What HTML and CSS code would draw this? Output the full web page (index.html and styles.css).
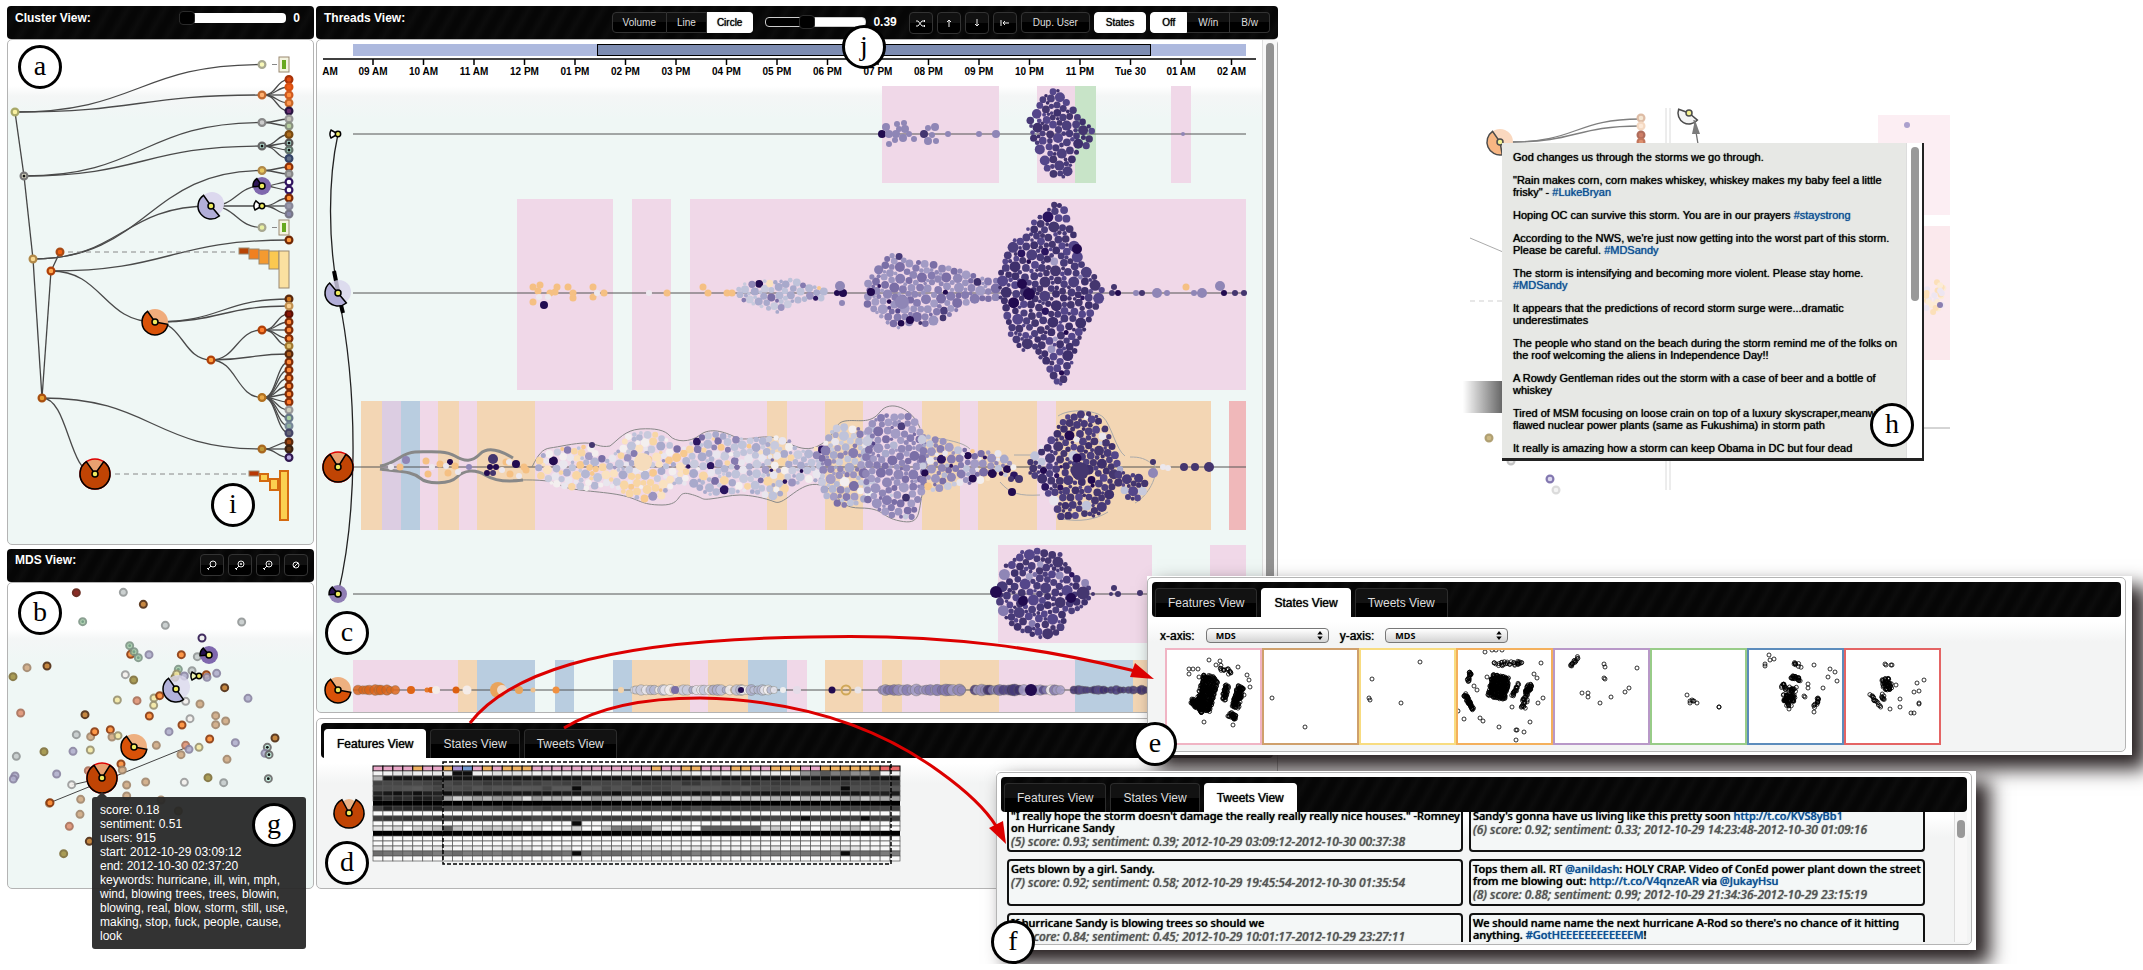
FILE: index.html
```html
<!DOCTYPE html>
<html lang="en">
<head>
<meta charset="utf-8">
<title>Cluster, MDS and Threads Views</title>
<link rel="stylesheet" href="styles.css">
</head>
<body>
<main class="stage">
  <div class="dashboard">
    <div class="column">
      <header class="bar">
        <h2 class="bar-title">Cluster View:</h2>
        <label class="slider slider-cluster"><input type="range" min="0" max="100" value="0" aria-label="Cluster level"><output>0</output></label>
      </header>
      <section class="panel cluster-panel"><svg id="cluster" viewBox="8 40 305 504"></svg></section>
      <header class="bar bar-mds">
        <h2 class="bar-title">MDS View:</h2>
        <div class="tools">
          <button class="btn icon" aria-label="Zoom"><svg viewBox="0 0 12 12"><circle cx="7" cy="5" r="3"/><path d="M5 7 2 10M1 9l2 2"/></svg></button>
          <button class="btn icon" aria-label="Zoom in"><svg viewBox="0 0 12 12"><circle cx="7" cy="5" r="3"/><path d="M5 7 2 10M1 9l2 2M6 5h2M7 4v2"/></svg></button>
          <button class="btn icon" aria-label="Zoom out"><svg viewBox="0 0 12 12"><circle cx="7" cy="5" r="3"/><path d="M5 7 2 10M1 9l2 2M6 5h2"/></svg></button>
          <button class="btn icon" aria-label="Reset"><svg viewBox="0 0 12 12"><circle cx="6" cy="6" r="3"/><path d="m4 8 4-4"/></svg></button>
        </div>
      </header>
      <section class="panel"><svg id="mds" viewBox="8 583 305 305"></svg></section>
    </div>
    <div class="column">
      <header class="bar">
        <h2 class="bar-title">Threads View:</h2>
        <div class="tools tools-threads">
          <div class="group group-mode">
            <button class="btn">Volume</button><button class="btn">Line</button><button class="btn on">Circle</button>
          </div>
          <label class="slider slider-threads"><input type="range" min="0" max="100" value="39" aria-label="Thread threshold"><output>0.39</output></label>
          <button class="btn icon" aria-label="Shuffle"><svg viewBox="0 0 12 12"><path d="M1 4h2l4 5h3M1 9h2l4-5h3M9 3l1 1-1 1M9 8l1 1-1 1"/></svg></button>
          <button class="btn icon" aria-label="Up"><svg viewBox="0 0 12 12"><path d="M6 10V3M4 5l2-2 2 2"/></svg></button>
          <button class="btn icon" aria-label="Down"><svg viewBox="0 0 12 12"><path d="M6 2v7M4 7l2 2 2-2"/></svg></button>
          <button class="btn icon" aria-label="Align left"><svg viewBox="0 0 12 12"><path d="M2 3v6M10 6H4M6 4 4 6l2 2"/></svg></button>
          <button class="btn">Dup. User</button>
          <button class="btn on">States</button>
          <div class="group">
            <button class="btn on">Off</button><button class="btn">W/in</button><button class="btn">B/w</button>
          </div>
        </div>
      </header>
      <section class="panel threads-panel"><svg id="threads" viewBox="317 40 960 672"></svg></section>
      <section class="panel framed">
        <nav class="tabs"><button class="tab on">Features View</button><button class="tab">States View</button><button class="tab">Tweets View</button></nav>
        <svg id="features" viewBox="321 757 952 126"></svg>
      </section>
    </div>
  </div>

  <div class="tooltip">score: 0.18<br>sentiment: 0.51<br>users: 915<br>start: 2012-10-29 03:09:12<br>end: 2012-10-30 02:37:20<br>keywords: hurricane, ill, win, mph, wind, blowing trees, trees, blowin, blowing, real, blow, storm, still, use, making, stop, fuck, people, cause, look</div>

  <svg id="backdrop" class="backdrop" viewBox="1460 100 490 395"></svg>
  <section class="popup">
    <div class="popup-text">
      <p>God changes us through the storms we go through.</p>
      <p>"Rain makes corn, corn makes whiskey, whiskey makes my baby feel a little frisky" - <a href="#">#LukeBryan</a></p>
      <p>Hoping OC can survive this storm. You are in our prayers <a href="#">#staystrong</a></p>
      <p>According to the NWS, we're just now getting into the worst part of this storm. Please be careful. <a href="#">#MDSandy</a></p>
      <p>The storm is intensifying and becoming more violent. Please stay home. <a href="#">#MDSandy</a></p>
      <p>It appears that the predictions of record storm surge were...dramatic underestimates</p>
      <p>The people who stand on the beach during the storm remind me of the folks on the roof welcoming the aliens in Independence Day!!</p>
      <p>A Rowdy Gentleman rides out the storm with a case of beer and a bottle of whiskey</p>
      <p>Tired of MSM focusing on loose crain on top of a luxury skyscraper,meanwhile flawed nuclear power plants (same as Fukushima) in storm path</p>
      <p>It really is amazing how a storm can keep Obama in DC but four dead</p>
    </div>
    <div class="track"><div class="thumb"></div></div>
  </section>

  <section class="window window-states">
    <div class="panel framed">
      <nav class="tabs"><button class="tab">Features View</button><button class="tab on">States View</button><button class="tab">Tweets View</button></nav>
      <div class="axes">
        <label for="x-axis">x-axis:</label><span class="select"><select id="x-axis"><option>MDS</option></select><svg viewBox="0 0 6 10"><path d="M3 0 6 4H0zM3 10 0 6h6z"/></svg></span>
        <label for="y-axis">y-axis:</label><span class="select"><select id="y-axis"><option>MDS</option></select><svg viewBox="0 0 6 10"><path d="M3 0 6 4H0zM3 10 0 6h6z"/></svg></span>
      </div>
      <div class="plots" id="plots"></div>
    </div>
  </section>

  <section class="window window-tweets">
    <div class="panel framed">
      <nav class="tabs"><button class="tab">Features View</button><button class="tab">States View</button><button class="tab on">Tweets View</button></nav>
      <div class="tweets">
        <div class="cards">
          <article class="card cut">"I really hope the storm doesn't damage the really really really nice houses." -Romney on Hurricane Sandy<em>(5) score: 0.93; sentiment: 0.39; 2012-10-29 03:09:12-2012-10-30 00:37:38</em></article>
          <article class="card cut">Sandy's gonna have us living like this pretty soon <a href="#">http://t.co/KVS8yBb1</a><em>(6) score: 0.92; sentiment: 0.33; 2012-10-29 14:23:48-2012-10-30 01:09:16</em></article>
          <article class="card">Gets blown by a girl. Sandy.<em>(7) score: 0.92; sentiment: 0.58; 2012-10-29 19:45:54-2012-10-30 01:35:54</em></article>
          <article class="card">Tops them all. RT <a href="#">@anildash</a>: HOLY CRAP. Video of ConEd power plant down the street from me blowing out: <a href="#">http://t.co/V4qnzeAR</a> via <a href="#">@JukayHsu</a><em>(8) score: 0.88; sentiment: 0.99; 2012-10-29 21:34:36-2012-10-29 23:15:19</em></article>
          <article class="card">If hurricane Sandy is blowing trees so should we<em>(9) score: 0.84; sentiment: 0.45; 2012-10-29 10:01:17-2012-10-29 23:27:11</em></article>
          <article class="card">We should name name the next hurricane A-Rod so there's no chance of it hitting anything. <a href="#">#GotHEEEEEEEEEEEEM</a>!</article>
        </div>
        <div class="track"><div class="thumb"></div></div>
      </div>
    </div>
  </section>

  <svg class="arrows" viewBox="0 0 2143 963">
    <path d="M470 723C505 678 590 640 810 637C950 633 1050 650 1135 671"/>
    <path d="M564 728C610 700 670 698 700 698C800 700 880 728 940 772C965 790 985 808 996 826"/>
    <polygon points="1154,679 1130,677 1135,663"/>
    <polygon points="1006,844 989,828 1003,821"/>
  </svg>
  <span class="marker m-a">a</span><span class="marker m-b">b</span><span class="marker m-c">c</span><span class="marker m-d">d</span><span class="marker m-e">e</span>
  <span class="marker m-f">f</span><span class="marker m-g">g</span><span class="marker m-h">h</span><span class="marker m-i">i</span><span class="marker m-j">j</span>
</main>
<script src="charts.js"></script>
</body>
</html>
```

FILE: styles.css
```css
* { box-sizing: border-box; }
body { margin: 0; background: #fff; color: #000; font-family: "Liberation Sans", Arial, sans-serif; font-size: 12px; }
svg { display: block; }
a { color: #0a4f94; text-decoration: none; }
button, select, input { font: inherit; margin: 0; }

.stage { position: relative; height: 964px; padding: 6px 0 0 7px; overflow: hidden; }
.dashboard { display: grid; grid-template-columns: 307fr 962fr 863fr; gap: 2px; align-items: start; }
.column > .panel > svg, .framed > svg { width: 100%; height: auto; }

.bar { display: flex; justify-content: space-between; height: 33px; padding: 6px 8px; border-radius: 4px; color: #fff; background: repeating-linear-gradient(120deg, #060606 0 4px, #0c0c0c 10px, #060606 16px); }
.bar-mds { margin-top: 4px; padding: 5px 6px 5px 8px; }
.bar-title { margin: 0; font-size: 12px; line-height: 12px; font-weight: bold; }
.tools { display: flex; gap: 4px; }
.group { display: flex; }
.btn { height: 21px; padding: 0 10px; border: 1px solid #333; border-radius: 4px; background: linear-gradient(#111 50%, #000 50%); color: #ddd; font-size: 10px; }
.btn.icon { display: grid; place-items: center; width: 24px; height: 22px; padding: 0; }
.btn.icon svg { width: 12px; height: 12px; fill: none; stroke: #eee; stroke-width: 1; }
.btn.on { background: #fff; border-color: #fff; color: #000; text-shadow: 0 0 1px #000; }
.tools-threads .btn:not(.icon) { padding: 0 11px; }
.tools-threads .group-mode .btn:not(.icon) { padding: 0 10px; }
.group .btn { border-radius: 0; }
.group .btn:first-child { border-radius: 4px 0 0 4px; }
.group .btn:last-child { border-radius: 0 4px 4px 0; }
.group .btn + .btn { border-left-width: 0; }

.slider { display: flex; align-items: center; gap: 7px; height: 12px; font-weight: bold; }
.slider input { appearance: none; width: 107px; height: 10px; border-radius: 4px; background: #fff; }
.slider input::-webkit-slider-thumb { appearance: none; width: 16px; height: 14px; border: 1px solid #2a2a2a; border-radius: 4px; background: #000; }
.slider-cluster { padding-right: 6px; }
.slider-threads { height: 19px; margin: 0 8px; }
.slider-threads input { width: 101px; border: 1px solid #ccc; background: linear-gradient(90deg, #000 40%, #fff 40%); }

.panel { border: 1px solid #b4b4b4; border-radius: 5px; background: linear-gradient(#fff 46px, #f4f6f6 56px, #eff7f5 80px); }
.threads-panel { margin-bottom: 5px; }
.framed { padding: 4px; background: linear-gradient(#fff 44px, #f3f4f4 64px); }
.tabs { display: flex; gap: 4px; height: 35px; padding: 6px 3px 0; border-radius: 4px; background: repeating-linear-gradient(120deg, #060606 0 4px, #0c0c0c 10px, #060606 16px); }
.tab { padding: 0 12px; border: 1px solid #2c2c2c; border-bottom: 0; border-radius: 4px 4px 0 0; background: linear-gradient(#121212 50%, #000 50%); color: #ddd; }
.tab.on { border-color: #fff; background: #fff; color: #000; text-shadow: 0 0 1px #000; }

.axis-label { font-size: 10px; font-weight: bold; text-anchor: middle; }

.tooltip { position: absolute; left: 92px; top: 797px; width: 214px; padding: 6px 8px; border-radius: 3px; background: rgba(38, 38, 38, .94); color: #fff; line-height: 14px; }
.tooltip::before { content: ""; position: absolute; left: 5px; top: -5px; border: 5px solid transparent; border-top: 0; border-bottom-color: #333; }

.backdrop { position: absolute; left: 1460px; top: 100px; width: 490px; opacity: .7; }
.popup { position: absolute; left: 1502px; top: 143px; display: flex; width: 422px; height: 318px; border-right: 2px solid #222; border-bottom: 3px solid #222; background: #e7e8e5; overflow: hidden; }
.popup-text { flex: 1; padding: 8px 8px 0 11px; font-size: 11px; line-height: 12px; text-shadow: 0 0 1px currentColor; }
.popup p { margin: 0 0 11px; }
.track { width: 16px; padding: 4px; border-left: 1px solid #ddd; background: #fff; }
.thumb { width: 8px; height: 154px; border-radius: 4px; background: #999; }

.window { position: absolute; background: #fff; box-shadow: 12px 12px 18px 2px #2a2324; }
.window-states { left: 1147px; top: 576px; width: 985px; height: 179px; padding: 1px 6px 3px 0; }
.window-tweets { left: 996px; top: 771px; width: 980px; height: 179px; padding: 1px 4px 5px 0; }
.window .panel { height: 100%; }
.axes { display: flex; align-items: center; gap: 11px; height: 15px; margin: 11px 0 5px 8px; text-shadow: 0 0 1px #000; }
.select { position: relative; }
.select select { display: block; appearance: none; width: 123px; height: 15px; padding: 0 9px; border: 1px solid #777; border-radius: 4px; background: linear-gradient(#fff, #d4d4d4); font: bold 9px "Open Sans", sans-serif; color: #000; }
.select svg { position: absolute; right: 6px; top: 3px; width: 6px; height: 9px; }
.plots { display: flex; padding-left: 13px; }
.plots svg { width: 97px; height: 97px; border: 2px solid; background: #fff; }
.plots circle { fill: none; stroke: #000; stroke-width: 1; opacity: .8; }

.tweets { display: flex; justify-content: space-between; height: 130px; overflow: hidden; }
.tweets .track { width: 13px; padding: 8px 2px; background: #f8f8f8; }
.tweets .thumb { height: 18px; }
.cards { display: grid; grid-template-columns: 1fr 1fr; grid-template-rows: 42px 47px 47px; gap: 7px 6px; width: 924px; margin-top: -2px; padding-left: 6px; font: 500 11px/12px "Noto Sans", sans-serif; text-shadow: 0 0 1px currentColor; }
.card { padding: 2px 0 2px 2px; border: 2px solid #111; border-radius: 4px; background: #f4f7f7; }
.card.cut { padding-top: 0; border-top: 0; border-radius: 0 0 4px 4px; }
.card em { display: block; margin-top: 2px; color: #555; font-size: 12px; }

.arrows { position: absolute; left: 0; top: 0; width: 100%; pointer-events: none; }
.arrows path { fill: none; stroke: #dc0000; stroke-width: 3; }
.arrows polygon { fill: #dc0000; }

.marker { position: absolute; width: 44px; height: 44px; border: 3px solid #000; border-radius: 50%; background: #fff; font: 28px/36px "Liberation Serif", serif; text-align: center; }
.m-a { left: 18px; top: 45px; }
.m-b { left: 18px; top: 591px; }
.m-c { left: 325px; top: 611px; }
.m-d { left: 325px; top: 841px; }
.m-e { left: 1133px; top: 722px; }
.m-f { left: 991px; top: 920px; }
.m-g { left: 252px; top: 803px; }
.m-h { left: 1870px; top: 403px; }
.m-i { left: 211px; top: 483px; }
.m-j { left: 842px; top: 25px; }
```

FILE: charts.js
```javascript
const NS = 'http://www.w3.org/2000/svg';
const $ = id => document.getElementById(id);
let seed = 7;
const rnd = () => { seed = (seed * 1664525 + 1013904223) % 4294967296; return seed / 4294967296; };
const pick = a => a[Math.floor(rnd() * a.length)];
function add(svg, tag, attrs, text) {
  const e = document.createElementNS(NS, tag);
  for (const k in attrs) e.setAttribute(k, attrs[k]);
  if (text) e.textContent = text;
  svg.appendChild(e);
}
const rect = (s, x, y, w, h, fill, more) => add(s, 'rect', { x, y, width: w, height: h, fill, ...more });
const dot = (s, cx, cy, r, fill, more) => add(s, 'circle', { cx, cy, r, fill, ...more });
const line = (s, x1, y1, x2, y2, stroke = '#444', more) => add(s, 'line', { x1, y1, x2, y2, stroke, ...more });
const path = (s, d, stroke = '#4a4a4a', more) => add(s, 'path', { d, stroke, fill: 'none', 'stroke-width': 1.3, ...more });
const link = (s, x1, y1, x2, y2) => { const m = (x1 + x2) / 2; path(s, `M${x1} ${y1}C${m} ${y1} ${m} ${y2} ${x2} ${y2}`); };
const ring = (s, x, y, outer, inner) => { dot(s, x, y, 3.4, inner, { stroke: outer, 'stroke-width': 2.2 }); };

// Sector glyph; angles run clockwise from twelve o'clock.
function pie(s, x, y, r, base, fill, a, b, edge) {
  const p = t => [x + r * Math.sin(t * Math.PI / 180), y - r * Math.cos(t * Math.PI / 180)].join(' ');
  if (base) dot(s, x, y, r, base, { stroke: edge || 'none', 'stroke-width': 1.5 });
  path(s, `M${x} ${y}L${p(a)}A${r} ${r} 0 ${b - a > 180 ? 1 : 0} 1 ${p(b)}Z`, '#000', { fill, 'stroke-width': 1.5 });
  dot(s, x, y, Math.min(3, r / 3), '#eeea60', { stroke: '#000', 'stroke-width': 1.5 });
}

/* Cluster tree */
(function () {
  const s = $('cluster');
  const trunk = [[15, 112], [24, 176], [33, 259], [42, 398], [51, 271], [60, 252]];
  for (let i = 0; i < 5; i++) line(s, ...trunk[i], ...trunk[i + 1], '#444', { 'stroke-width': 1.3 });
  [[15,112,262,64.5],[15,112,262,95],[24,176,262,122.5],[24,176,262,146],[33,259,262,170.5],[33,259,211,206],[211,206,262,186],[211,206,262,206],[211,206,262,227.5],
   [51,271,289,240],[51,271,155,322],[155,322,289,299],[155,322,289,306],[155,322,211,360],[211,360,262,330],[211,360,289,354],[211,360,262,397.5],[42,398,262,449],[42,398,95,474]].forEach(l => link(s, ...l));
  const fans = [[95, [79.5,87,95,103,111]], [122.5, [119,126]], [146, [134.5,143,150,158.5]], [170.5, [167,174]], [186, [182,190]], [206, [198,206,214]],
    [330, [314,322,330,338.5,346]], [397.5, [362,370,378,386,394,402,410,418,426,433]], [449, [442,449,457.5]]];
  fans.forEach(([y, ys]) => ys.forEach(v => link(s, 264, y, 289, v)));
  const leaf = { 79.5:['#a83208','#e04a10'],87:['#d85010','#ee5a18'],95:['#d05a20','#ff9040'],103:['#c86828','#ff9850'],111:['#281440','#6a3070'],119:['#999','#c4c4b8'],126:['#889080','#b8d0a0'],134.5:['#7a4a10','#b07020'],
    143:['#555','#b8f0e0'],150:['#607068','#b0e8d0'],158.5:['#344468','#607088'],167:['#8a3008','#ff8830'],174:['#888','#aaa'],182:['#301460','#fff'],190:['#301460','#fff'],198:['#7a2804','#ff9030'],206:['#889','#99a'],214:['#778','#88a'],
    240:['#702804','#ff9a40'],299:['#58280c','#d07820'],306:['#c09050','#f8d090'],314:['#5a1004','#8a1808'],346:['#a07830','#e0c070'],354:['#58280c','#b06020'],402:['#8a3008','#ff7828'],410:['#999','#ccd0c0'],418:['#678','#a8d0a0'],426:['#789','#90b0a0'],433:['#446','#667'],442:['#58280c','#a04810'],449:['#382010','#603818'],457.5:['#301850','#b8a8e0'] };
  fans.flatMap(f => f[1]).concat(240, 299, 306, 354).forEach(y => ring(s, 289, y, ...(leaf[y] || ['#802c06', '#ff8a38'])));
  [[15,112,'#a8a868','#f8f0a0'],[24,176,'#777','#f0f0d8'],[33,259,'#b08848','#f8d890'],[42,398,'#a85010','#e8a030'],[51,271,'#b04008','#ffa850'],[60,252,'#a84a14','#f06010'],
   [262,64.5,'#a8a890','#f8f8b8'],[262,95,'#c06830','#ffb070'],[262,122.5,'#888','#ccc'],[262,146,'#666','#c0f0e0'],[262,170.5,'#b08848','#e8c860'],[262,227.5,'#a8a890','#e8f0a0'],[211,360,'#b04008','#ffa040'],[262,330,'#b04008','#ff8030'],[262,397.5,'#b07020','#e8a848'],[262,449,'#a86820','#c09838']].forEach(n => ring(s, ...n));
  [[24,176],[262,146],[289,143],[289,150]].forEach(p => dot(s, ...p, 1.5, '#111'));
  dot(s, 212, 204, 12, '#dcd8ee');
  pie(s, 211, 206, 13, '', '#b2aed8', 140, 325);
  pie(s, 262, 186, 9, '#7f68ae', '#2d1458', 265, 325);
  pie(s, 262, 206, 8, '', '#fff', 240, 310);
  pie(s, 155, 322, 13, '#f0ac7c', '#d95208', 100, 325);
  pie(s, 95, 474, 15, '#e8a070', '#c04404', 35, 325, '#d00');
  const dash = { 'stroke-dasharray': '5 4' };
  line(s, 272, 64.5, 277, 64.5, '#888'); line(s, 272, 227.5, 277, 227.5, '#888');
  line(s, 68, 252, 239, 252, '#888', dash); line(s, 115, 474, 249, 474, '#888', dash);
  const b = { stroke: '#998870' };
  [57, 220].forEach(y => { rect(s, 279, y, 10, 15, '#f4f4e0', b); rect(s, 282, y + 3, 4, 9, '#68a820'); });
  [[239,248,10,6,'#b84404'],[249,249,10,10,'#f08020'],[259,250,10,14,'#f49a30'],[269,251,10,18,'#fbc850'],[279,251,10,37,'#fbe0a0'],[249,471,10,5,'#b83804']].forEach(r => rect(s, ...r, b));
  [[260,474,8,7],[270,479,8,11],[280,471,8,49]].forEach(r => rect(s, ...r, '#fbd050', { stroke: '#d46a10', 'stroke-width': 2 }));
})();

/* MDS scatter, measured on a grid three times finer than the panel */
(function () {
  const s = $('mds'), at = (x, y) => [x / 3, 540 + y / 3];
  const K = { r:['#5a1408','#7a1008'], k:['#4a2408','#c07828'], o:['#8a3406','#ff8a30'], g:['#8f9494','#c4caca'], n:['#7c9484','#a4cca8'], t:['#a08468','#d0a880'], y:['#98906c','#f4e8a0'],
    w:['#999','#f4f0ec'], p:['#28104a','#eee'], v:['#8882a0','#b0aecb'], c:['#7c6c34','#a09040'], s:['#a86c54','#e09070'], a:['#666','#c0f0dc'] };
  line(s, ...at(150, 788), ...at(565, 620)); line(s, ...at(215, 735), ...at(307, 714));
  ['r229,158 g370,157 k430,193 n248,245 g496,256 g725,246 p606,294 n389,317 o392,343 n402,335 n415,353 v447,344 o544,344 g592,350 t81,383 k141,378 w376,404 c401,420 n535,388 g576,392 c525,412 y530,402 v553,408',
   'o619,404 v650,400 k674,443 v744,475 y352,480 s411,482 y462,474 o479,467 y461,496 w557,484 t600,492 s62,519 k255,524 o448,528 w570,536 t647,527 t647,554 t677,543 o546,555 v507,575 o629,597 v706,608 k825,594',
   'a802,622 v795,640 a807,644 a805,716 g229,584 t272,590 o284,575 o331,569 t336,591 y354,587 t469,616 s557,616 v567,628 y597,622 t543,644 t681,658 y271,630 v219,634 c132,635 g49,649 v45,708 v40,717 v170,702',
   'w215,734 s265,692 o363,672 t367,690 t380,735 t437,726 w553,727 c624,713 g671,728 t242,778 t380,768 t148,790 o150,788 t240,823 s208,859 k268,904 c191,941 t483,780 c33,410 v621,412 c535,813'].join(' ').split(' ').forEach(d => {
    const q = at(...d.slice(1).split(',').map(Number)); if (q[0] < 13) q[0] = 13;
    dot(s, ...q, 3.5, K[d[0]][1], { stroke: K[d[0]][0], 'stroke-width': 2, opacity: .88 });
    if ('an'.includes(d[0])) dot(s, ...q, 1.4, d[0] === 'a' ? '#111' : '#78a088');
  });
  dot(s, 178, 687, 12, '#dcd8ee', { opacity: .8 });
  pie(s, 176, 689, 13, '', '#b2b2da', 145, 325);
  pie(s, 209, 655, 9, '#7f68ae', '#241050', 265, 320);
  pie(s, 199, 676, 8, '', '#eef4b8', 240, 300);
  pie(s, 134, 747, 13, '#eeb080', '#d95208', 100, 325);
  pie(s, 102, 778, 15, '#e8a070', '#c04404', 32, 328, '#d00');
})();

/* Threads timeline */
(function () {
  const s = $('threads');
  const C = { p:'#f0d8e8', o:'#f3d6b4', b:'#b9cde0', v:'#dccde2', g:'#c8e4c8', r:'#f0b8ba' };
  const bands = (y, h, list) => list.forEach(([c, a, b]) => rect(s, a, y, b - a, h, C[c]));
  rect(s, 353, 44, 893, 12, '#adb9de'); rect(s, 597.5, 44.5, 553, 11, '#7d8cb1', { stroke: '#000' });
  line(s, 323, 59, 1256, 59, '#000', { 'stroke-width': 1.5 });
  ['09 AM','10 AM','11 AM','12 PM','01 PM','02 PM','03 PM','04 PM','05 PM','06 PM','07 PM','08 PM','09 PM','10 PM','11 PM','Tue 30','01 AM','02 AM'].forEach((t, i) => {
    const x = 373 + i * 50.5; line(s, x, 59, x, 65, '#000', { 'stroke-width': 1.5 }); add(s, 'text', { x, y: 75, class: 'axis-label' }, t);
  });
  add(s, 'text', { x: 330, y: 75, class: 'axis-label' }, 'AM');
  bands(86, 97, [['p',882,999],['p',1037,1075],['g',1075,1096],['p',1171,1191]]);
  bands(199, 191, [['p',517,613],['p',632,671],['p',690,1246]]);
  bands(401, 129, [['o',361,382],['v',382,401],['b',401,420],['p',420,438],['o',438,459],['p',459,477],['o',477,535],['p',535,767],['o',767,787],['p',787,825],['o',825,863],['p',863,922],['o',922,960],['p',960,978],['o',978,1037],['p',1037,1056],['o',1056,1211],['r',1229,1246]]);
  bands(545, 98, [['p',998,1152],['p',1210,1246]]);
  bands(660, 52, [['p',353,458],['o',458,477],['b',477,535],['b',555,574],['b',613,632],['o',632,690],['p',690,708],['o',708,748],['b',748,787],['p',787,807],['o',825,863],['p',863,882],['o',882,902],['p',902,940],['o',940,999],['p',999,1075],['b',1075,1133],['o',1133,1246]]);
  [134, 293, 467, 594, 690].forEach(y => line(s, 353, y, 1246, y, '#555'));

  // Ribbon that wraps the widest thread
  path(s, 'M380 466C396 464 402 452 415 452S445 450 455 456S472 462 480 454S500 450 513 458', '#888', { 'stroke-width': 3 });
  path(s, 'M380 469C400 472 412 471 420 478S450 484 457 477S475 469 485 475S510 482 523 480', '#888', { 'stroke-width': 3 });
  path(s, 'M532 467C538 455 542 449 550 448S575 443 585 443S600 448 610 446C618 440 625 430 640 429S665 430 670 436S690 443 700 435S725 432 735 437S755 436 770 437S800 455 818 446S833 423 845 421S870 425 880 412S912 408 920 428', '#888', { 'stroke-width': 1 });
  path(s, 'M513 480C530 480 550 479 560 485S600 491 620 495S640 505 662 505S675 490 690 494S700 500 710 499S730 495 740 495S765 498 775 502S800 480 820 485S835 508 860 508S880 517 900 521S918 515 922 495', '#888', { 'stroke-width': 1 });
  path(s, 'M936 438C955 441 965 444 970 449M1014 455H1036M1000 482C1010 494 1020 496 1040 495M1058 416C1070 408 1095 410 1103 417S1116 450 1125 456M1130 457C1140 457 1145 458 1155 466C1158 480 1145 498 1135 503M1108 512C1095 520 1080 522 1062 519', '#aaa', { 'stroke-width': 1 });

  // Fills an envelope of [x, top, bottom] stops; each bubble grows until it touches another.
  function pack(env, big, colour) {
    const done = [], x0 = env[0][0], x1 = env[env.length - 1][0];
    const span = x => { let i = 1; while (i < env.length - 1 && env[i][0] < x) i++; const a = env[i - 1], b = env[i], t = (x - a[0]) / (b[0] - a[0]); return [a[1] + (b[1] - a[1]) * t, a[2] + (b[2] - a[2]) * t]; };
    [[big, .4, 0], [3.9, 60, 3.3], [3.9, 120, 2.9], [3.2, 160, 2.3], [2.6, 120, 1.8]].forEach(([max, per, min]) => {
      for (let n = (x1 - x0) * per; n > 0; n--) {
        const x = x0 + rnd() * (x1 - x0), [t, b] = span(x), y = t + rnd() * (b - t);
        let r = Math.min(max, y - t, b - y);
        const need = min || max - .6;
        if (r < need) continue;
        for (const c of done) { const g = Math.hypot(c[0] - x, c[1] - y) - c[2] + .3; if (g < r) { r = g; if (r < need) break; } }
        if (r < need) continue;
        done.push([x, y, r]); dot(s, x.toFixed(1), y.toFixed(1), r.toFixed(1), colour(x));
      }
    });
  }
  const D = ['#44366f','#4c3f7d','#3e306c','#54468a','#473a78'], L = ['#8f86b6','#9a93bf','#857bb0','#a39cc5','#7a6ea6'], V = ['#b4b7d3','#bfc3da','#a8a9cb','#c8cadd'], O = ['#f7c98e','#f8d6a4','#fae2c0'], W = ['#f3efef','#e9e6ee'], X = ['#220b50','#2b1560'];
  const mix = (...w) => { let q = rnd() * 100; for (const [n, set] of w) { if ((q -= n) < 0) return pick(set); } return pick(w[0][1]); };
  pack([[1030,117,125],[1035,113,148],[1042,97,160],[1047,93,172],[1053,88,178],[1060,89,179],[1067,97,179],[1071,103,165],[1078,115,152],[1086,121,150],[1092,128,136]], 5, () => pick(D));
  pack([[866,281,307],[875,270,313],[888,253,325],[900,253,330],[912,260,325],[932,260,328],[945,264,320],[965,270,306],[985,277,302],[998,278,302]], 5, () => mix([91, L], [6, D], [3, X]));
  pack([[1000,272,303],[1006,252,315],[1010,240,336],[1022,235,352],[1035,218,352],[1044,212,364],[1055,201,384],[1061,202,388],[1069,212,375],[1075,238,352],[1085,262,330],[1095,275,312],[1102,284,302]], 5.5, () => mix([96, D], [2, L], [2, X]));
  pack([[737,288,298],[745,282,304],[760,279,308],[778,280,314],[795,277,304],[808,284,302],[824,287,302]], 4, () => mix([80, V], [12, L], [4, X], [4, O]));
  const warm = () => mix([36, O], [36, V], [21, W], [5, L], [2, X]), cool = () => mix([64, V], [17, W], [7, O], [8, L], [4, X]);
  pack([[538,458,478],[545,450,482],[560,447,490],[590,444,491],[605,457,487],[618,450,491],[626,434,496],[645,430,503],[662,433,500],[673,445,486],[686,446,486],[700,434,492],[715,431,498],[745,438,492],[775,435,501],[788,438,490],[800,450,484],[822,445,482]], 4.5, x => x < 690 ? warm() : cool());
  pack([[822,445,495],[835,424,507],[848,423,508],[866,430,503],[872,424,500]], 5, () => mix([56, V], [30, L], [9, W], [5, X]));
  pack([[866,425,502],[880,414,512],[888,412,518],[912,413,520],[918,425,502],[924,434,492]], 5, () => mix([95, L], [2, D], [3, V]));
  pack([[922,433,492],[943,438,492],[960,447,486],[980,450,484],[1000,450,476],[1014,464,480]], 4.5, () => mix([54, L], [22, V], [12, W], [5, O], [7, X]));
  pack([[1030,456,476],[1040,446,486],[1050,438,500],[1058,424,520],[1070,412,521],[1083,409,517],[1096,414,518],[1106,427,510],[1114,447,490],[1120,462,485]], 5, () => mix([87, D], [5, X], [5, V], [2, W], [1, O]));
  pack([[1118,470,488],[1128,472,500],[1140,474,502],[1146,480,488]], 5, () => mix([70, D], [30, V]));
  pack([[1000,588,616],[1005,564,618],[1015,556,630],[1022,550,634],[1036,547,638],[1047,550,641],[1060,552,634],[1068,566,616],[1078,575,611],[1089,580,602]], 5.5, () => mix([96, D], [3, L], [1, X]));
  dot(s, 643, 462, 9, '#f6dcbc');
  [[996,592,6,2],[1023,601,5,2],[1071,598,5,2],[1083,593,6.5,1],[1093,594,2,1],[1111,594,2,1],[1114,588,3,1],[1118,594,3,1],[1140,593,3,1],[1080,471,9,1],[1077,458,4.5,2],[1022,284,5,2],[1029,294,6,2],[1077,249,5,2],[902,302,7,0],[910,320,4,2],
   [1153,462,3,1],[1153,473,5,0],[1184,467,4,1],[1195,467,4,1],[1209,467,5,1],[1012,492,4,2],[1011,479,3,1],[1019,479,4,1],
   [882,134,4,2],[886,127,4,0],[889,134,4,0],[889,144,3,0],[897,124,3,0],[904,123,3,0],[896,134,4,0],[905,129,4,0],[903,138,4,0],[909,134,3,0],[914,139,3,0],[899,129,3,0],[895,140,3,0],[924,134,4,1],[928,128,3,0],[935,127,4,0],[932,135,3,0],[928,141,4,0],[936,141,3,0],[948,134,3,0],[979,134,3,0],[996,134,4,0],[1183,134,2,0],
   [837,293,3,2],[843,293,4,2],[840,286,5,0],[842,303,3,0],[871,292,4,2],[1112,293,3,1],[1118,293,3,2],[1114,287,3,1],[1136,293,3,0],[1142,293,3,1],[1157,293,5,0],[1167,293,3,0],[1194,293,3,0],[1202,293,5,0],[1220,286,5,0],[1224,293,3,2],[1235,293,3,1],[1244,293,3,1],[544,305,4,2],
   [406,460,4,0],[450,462,3,2],[469,467,3,0],[493,459,5,1],[490,467,3,2],[496,467,3,2],[487,473,3,2],[493,473,3,1],[516,464,4,2],[592,445,3,1]].forEach(([x, y, r, k]) => dot(s, x, y, r, ['#8f86b6', '#44366f', '#220b50'][k]));
  [[533,287],[540,285],[533,302],[538,291],[550,293],[555,292],[557,287],[568,287],[573,293],[573,298],[593,287],[593,297],[604,293],[667,293],[703,287],[708,293],[727,293],[732,293],[426,461],[428,474],[440,464],[448,473],[455,466],[510,474],[506,462],[524,467],[526,470],[1186,287],[400,467]].forEach(p => dot(s, ...p, 3.5, '#f5c083'));
  [[539,297],[548,297],[597,293],[649,293],[391,467],[432,467],[446,466],[458,472],[509,462],[519,476],[502,470],[1163,467],[1168,468]].forEach(p => dot(s, ...p, 3, '#ece8ee'));

  // Bottom strip of overlapping bubbles
  const strip = (a, b, step, cols, r) => { for (let x = a; x < b; x += step * (.5 + rnd())) dot(s, x.toFixed(1), 690, r - 1 + rnd() * 2, pick(cols), { stroke: '#665', 'stroke-opacity': .35, 'fill-opacity': .85 }); };
  strip(358, 398, 4, ['#dd6a1c', '#d8641a'], 4.5);
  [[411,4,'#e06414'],[427,2.5,'#e87828'],[431,3,'#e06414'],[436,4,'#f4ece8'],[456,3.5,'#dd6010'],[467,4.5,'#f4ece8'],[498,8,'#e9a45c'],[502,5,'#f0dccc'],[519,4,'#e9a45c'],[533,2.5,'#eec08c'],[556,3.5,'#f09040'],[621,3,'#f2d2aa'],[832,3.5,'#220b50'],[858,3.5,'#e8e4e8'],[783,3,'#eee'],[797,4,'#e4dce8']].forEach(([x, r, f]) => dot(s, x, 690, r, f));
  dot(s, 846, 690, 4.5, 'none', { stroke: '#d0a858', 'stroke-width': 2 });
  strip(634, 775, 3.5, [...V, ...W, '#f0d8c0'], 4.5);
  dot(s, 675, 690, 4, '#7a6ea6'); dot(s, 741, 690, 3, '#220b50');
  strip(882, 965, 3.5, L, 5); strip(975, 1062, 3.5, [...L, ...D, W[0]], 5); strip(1074, 1150, 3.5, D, 4);
  dot(s, 1031, 690, 6, '#220b50');

  path(s, 'M338 134C328 180 328 240 338 293C360 400 356 520 338 594', '#222');
  path(s, 'M334 271l4 20M338 293l5 20', '#000', { 'stroke-width': 4 });
  pie(s, 338, 134, 8, '', '#fff', 240, 300);
  dot(s, 339, 292, 12, '#d8d4ec', { opacity: .8 });
  pie(s, 338, 293, 13, '', '#b2aed8', 140, 320);
  pie(s, 338, 467, 15, '#e8a070', '#c04404', 32, 328, '#d00');
  pie(s, 338, 594, 9, '#8f7db4', '#2d1458', 265, 320);
  pie(s, 338, 690, 13, '#eeb080', '#d95208', 100, 325);
  rect(s, 1262, 40, 15, 672, '#f8f8f8'); line(s, 1262.5, 40, 1262.5, 712, '#ddd');
  rect(s, 1266, 43, 8, 640, '#929292', { rx: 4 });
})();

/* Feature heat map */
(function () {
  const s = $('features'), states = 'ppppoppovbpopooop' + 'pppppppppppopp' + 'oopppooppoooppoooooo' + 'rr';
  const S = { p:'#e8a8c8', o:'#eeb060', v:'#a890d0', b:'#7098d0', r:'#e86868' };
  const base = [235, 20, 66, 80, 26, 190, 0, 68, 250, 58, 250, 225, 0, 250, 250, 235, 115, 250];
  const cw = 527 / 53;
  for (let c = 0; c < 53; c++) {
    const x = 373 + c * cw, opt = { stroke: '#555', 'stroke-width': .7 };
    rect(s, x, 765, cw, 5, S[states[c]], { stroke: '#000' });
    base.forEach((v, r) => {
      let g = v;
      if (v > 20 && v < 245) g = v + (rnd() - .5) * (r === 5 || r === 11 ? 80 : 24);
      if (r === 0 && c > 7 && c < 10) g = 15;
      if (r === 0 && c > 42 && c < 51) g = 70 + rnd() * 80;
      if (r === 1 && c === 0) g = 180;
      if ((r === 5 || r === 7) && c < 7) g = 20 + rnd() * 50;
      if ([3, 10, 16].includes(r) && c === 20) g = 10;
      if ([3, 16].includes(r) && c === 47) g = 10;
      if (r === 9 && [43, 49].includes(c)) g = 10;
      if (r === 11 && (c === 7 || (c > 32 && c < 39))) g = 90;
      if (r === 11 && c > 23 && c < 28) g = 120;
      g = Math.max(0, Math.min(250, Math.round(g)));
      rect(s, x, 770 + r * 5, cw, 5, `rgb(${g},${g},${g})`, v ? opt : {});
    });
  }
  rect(s, 443, 761, 448, 102, 'none', { stroke: '#000', 'stroke-width': 1.5, 'stroke-dasharray': '4 2' });
  dot(s, 349, 807, 9, '#eab488');
  pie(s, 349, 812, 15, '', '#c04404', 28, 332);
})();

/* Faded surroundings of the tweet popup */
(function () {
  const s = $('backdrop');
  rect(s, 1878, 115, 72, 100, '#fbe8ee'); rect(s, 1922, 226, 28, 134, '#fae0e6');
  add(s, 'linearGradient', { id: 'fade' });
  $('fade').innerHTML = '<stop offset="0" stop-color="#fff"/><stop offset="1" stop-color="#222"/>';
  rect(s, 1463, 381, 40, 32, 'url(#fade)');
  link(s, 1512, 142, 1640, 119); link(s, 1512, 142, 1640, 126);
  [[118,'#d0a080','#f0dcc0'],[126,'#f0c8a8','#fce0c8'],[135,'#903018','#b84828'],[142,'#a83c18','#d06030']].forEach(([y, a, b]) => ring(s, 1641, y, a, b));
  pie(s, 1500, 142, 13, '#f8c8a4', '#f49850', 170, 325);
  [1666, 1670].forEach(x => line(s, x, 108, x, 490, '#ccc'));
  pie(s, 1689, 113, 11, '', '#eee', 130, 290);
  path(s, 'M1694 120l4 24', '#333'); add(s, 'polygon', { points: '1695,120 1692,134 1700,134', fill: '#444' });
  line(s, 1470, 238, 1503, 252, '#888'); line(s, 1470, 301, 1503, 301, '#bbb', { 'stroke-dasharray': '5 4' }); line(s, 1922, 428, 1950, 428, '#888');
  for (let i = 0; i < 26; i++) dot(s, 1926 + rnd() * 18, 280 + rnd() * 32, 3, pick(['#fbd49c', '#fce4c4', '#e8dcec']));
  dot(s, 1907, 125, 3, '#8878b8'); dot(s, 1940, 305, 3, '#5a4890');
  ring(s, 1489, 438, '#907838', '#b89c50'); ring(s, 1550, 479, '#504090', '#ccc8e8'); ring(s, 1511, 461, '#aaa', '#ddd'); ring(s, 1556, 490, '#ccc', '#eee');
})();

/* State scatter plots: seg = [x1, y1, x2, y2, width, count] */
[['#f0b4c4', [[46,28,37,62,16,300],[26,52,38,63,5,60],[62,37,58,54,4,40],[76,38,70,60,7,110],[64,66,71,70,5,30],[50,17,66,25,5,16]], [24,21,28,21,33,21,24,26,34,29,44,12,55,13,73,19,82,27,84,32,85,39,39,74,68,77,79,47]],
 ['#cfa06c', [], [10,50,43,79]],
 ['#f8dc80', [], [61,14,13,31,10,50,11,52,42,55]],
 ['#f4b05c', [[45,28,40,50,18,260],[38,16,66,15,4,30],[15,24,10,36,3,18],[8,45,17,62,3,50],[74,35,67,60,5,60],[62,35,57,48,3,20]], [29,4,36,2,40,2,46,2,85,15,78,26,81,30,87,50,82,55,43,79,74,74,60,82,61,82,68,84,60,92,2,63,8,71,24,70,27,73,31,29,18,38,21,42,56,59]],
 ['#b898c8', [[18,18,25,9,2,14]], [51,16,52,19,52,31,51,30,84,20,76,40,72,44,58,49,47,55,35,49,35,45,29,45]],
 ['#98cc88', [], [37,47,40,53,43,53,47,55,42,52,69,59,69,59,40,55,44,53]],
 ['#5c8cbc', [[44,29,54,31,4,22],[34,38,50,42,5,30],[36,50,48,50,7,45],[42,46,42,58,5,20],[72,50,67,60,3,14],[46,15,55,18,3,8]], [22,7,23,12,18,16,18,18,27,11,67,17,83,21,88,24,81,29,90,33,61,36,61,40,76,40,58,49,57,48,67,64,42,61]],
 ['#e46464', [[42,30,44,42,9,50],[26,46,37,60,2,14],[38,45,40,56,3,8]], [41,16,42,17,47,17,48,17,52,37,56,51,56,59,46,61,73,35,80,32,70,44,75,43,75,55,75,56,67,65,70,65]]
].forEach(([c, segs, pts]) => {
  const s = document.createElementNS(NS, 'svg');
  s.setAttribute('viewBox', '2 2 93 93'); s.style.borderColor = c; $('plots').appendChild(s);
  segs.forEach(([x1, y1, x2, y2, w, n]) => {
    const len = Math.hypot(x2 - x1, y2 - y1);
    for (; n > 0; n--) { const t = rnd(), o = (rnd() - .5) * w; dot(s, x1 + (x2 - x1) * t + (y2 - y1) / len * o, y1 + (y2 - y1) * t - (x2 - x1) / len * o, 2, 'none'); }
  });
  for (let i = 0; i < pts.length; i += 2) dot(s, pts[i], pts[i + 1], 2, 'none');
});
```
